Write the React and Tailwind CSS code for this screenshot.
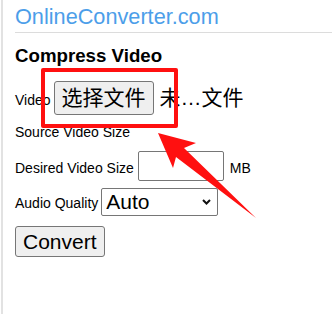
import React from 'react';

const sans = { fontFamily: 'Arial, "Liberation Sans", "Noto Sans CJK SC", sans-serif' };

function Chevron() {
  return (
    <svg className="pointer-events-none absolute right-[7px] top-1/2 -translate-y-1/2" width="9" height="6" viewBox="0 0 9 6">
      <path d="M1 1l3.5 3.5L8 1" fill="none" stroke="#111" strokeWidth="2" />
    </svg>
  );
}

export default function App() {
  return (
    <div className="relative min-h-[314px] w-[332px] overflow-hidden bg-white text-black" style={sans}>
      <div className="ml-[1px] min-h-[314px] border-l-2 border-[#e2e2e2] pl-[12px]">
        <h1 className="pt-[4px] text-[21.7px] font-normal leading-[25px] text-[#4c9ee9]">OnlineConverter.com</h1>
        <hr className="mt-[3px] border-t border-[#dcdcdc]" />

        <h2 className="mt-[12px] text-[18.7px] font-bold leading-[22px]">Compress Video</h2>

        <div className="mt-[14px] flex items-baseline text-[14px]">
          <span className="mr-[3px]">Video</span>
          <button type="button" className="rounded-[3px] border border-[#767676] bg-[#efefef] px-[7px] py-[4px] text-[21px] leading-[24px]">
            选择文件
          </button>
          <span className="ml-[6px] text-[21px] leading-[24px]">未…文件</span>
        </div>

        <p className="mt-[9px] text-[14px] leading-[16px]">Source Video Size</p>

        <div className="mt-[11px] flex items-center text-[14px] leading-[16px]">
          <span className="mt-[4px]">Desired Video Size</span>
          <input type="text" className="ml-[4px] h-[30px] w-[86px] rounded-[2px] border border-[#767676] px-1 text-[21px]" />
          <span className="ml-[6px] mt-[4px]">MB</span>
        </div>

        <div className="mt-[7px] flex items-center text-[14px] leading-[16px]">
          <span className="mt-[2px]">Audio Quality</span>
          <div className="relative ml-[3px]">
            <select className="h-[28px] w-[117px] appearance-none rounded-[2px] border border-[#767676] bg-white pl-[4px] text-[21px] leading-[24px]">
              <option>Auto</option>
            </select>
            <Chevron />
          </div>
        </div>

        <button type="button" className="mt-[10px] h-[31px] rounded-[3px] border border-[#767676] bg-[#efefef] px-[7px] text-[21px] leading-[24px]">
          Convert
        </button>
      </div>

      {/* annotation overlay */}
      <div className="pointer-events-none absolute left-[41px] top-[68px] h-[60px] w-[137px] rounded-[2px] border-[4px] border-[#ff1010]" />
      <svg className="pointer-events-none absolute left-0 top-0" width="332" height="314" viewBox="0 0 332 314">
        <polygon points="158,133 196,143 184,148 256,218 176,157 173,168" fill="#ff1010" />
      </svg>
    </div>
  );
}
